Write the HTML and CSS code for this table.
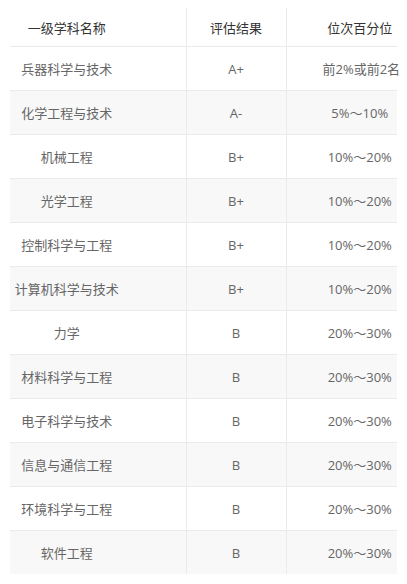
FILE: index.html
```html
<!DOCTYPE html>
<html lang="zh">
<head>
<meta charset="utf-8">
<link rel="stylesheet" href="styles.css">
</head>
<body>
<div class="wrap">
<table class="rank">
<colgroup><col class="c1"><col class="c2"><col class="c3"></colgroup>
<thead>
<tr><th class="name">一级学科名称</th><th>评估结果</th><th class="pct">位次百分位</th></tr>
</thead>
<tbody>
<tr><td class="name">兵器科学与技术</td><td>A+</td><td class="pct">前2%或前2名</td></tr>
<tr><td class="name">化学工程与技术</td><td>A-</td><td class="pct">5%～10%</td></tr>
<tr><td class="name">机械工程</td><td>B+</td><td class="pct">10%～20%</td></tr>
<tr><td class="name">光学工程</td><td>B+</td><td class="pct">10%～20%</td></tr>
<tr><td class="name">控制科学与工程</td><td>B+</td><td class="pct">10%～20%</td></tr>
<tr><td class="name">计算机科学与技术</td><td>B+</td><td class="pct">10%～20%</td></tr>
<tr><td class="name">力学</td><td>B</td><td class="pct">20%～30%</td></tr>
<tr><td class="name">材料科学与工程</td><td>B</td><td class="pct">20%～30%</td></tr>
<tr><td class="name">电子科学与技术</td><td>B</td><td class="pct">20%～30%</td></tr>
<tr><td class="name">信息与通信工程</td><td>B</td><td class="pct">20%～30%</td></tr>
<tr><td class="name">环境科学与工程</td><td>B</td><td class="pct">20%～30%</td></tr>
<tr><td class="name">软件工程</td><td>B</td><td class="pct">20%～30%</td></tr>
</tbody>
</table>
</div>
</body>
</html>
```
FILE: styles.css
```css
html, body {
  margin: 0;
  padding: 0;
  background: #fff;
}
.wrap {
  margin: 8px 0 0 10px;
  width: 387px;
}
.rank {
  border-collapse: collapse;
  table-layout: fixed;
  width: 387px;
  font-family: "Open Sans", "Noto Sans CJK SC", sans-serif;
  font-size: 13px;
  color: #666;
}
.c1 { width: 176px; }
.c2 { width: 100px; }
.c3 { width: 111px; }
.rank th, .rank td {
  padding: 0;
  text-align: center;
  white-space: nowrap;
  border-bottom: 1px solid #ebebeb;
  border-left: 1px solid #ebebeb;
}
.rank th:first-child, .rank td:first-child {
  border-left: none;
}
.rank th {
  font-weight: normal;
  color: #333;
  height: 38px;
}
.rank td {
  height: 43px;
}
.rank .name {
  padding-right: 62px;
}
.rank .pct {
  padding-left: 36px;
}
.rank tbody tr:nth-child(even) td {
  background: #f8f8f8;
}
.rank tbody tr:last-child td {
  border-bottom: none;
}
```
